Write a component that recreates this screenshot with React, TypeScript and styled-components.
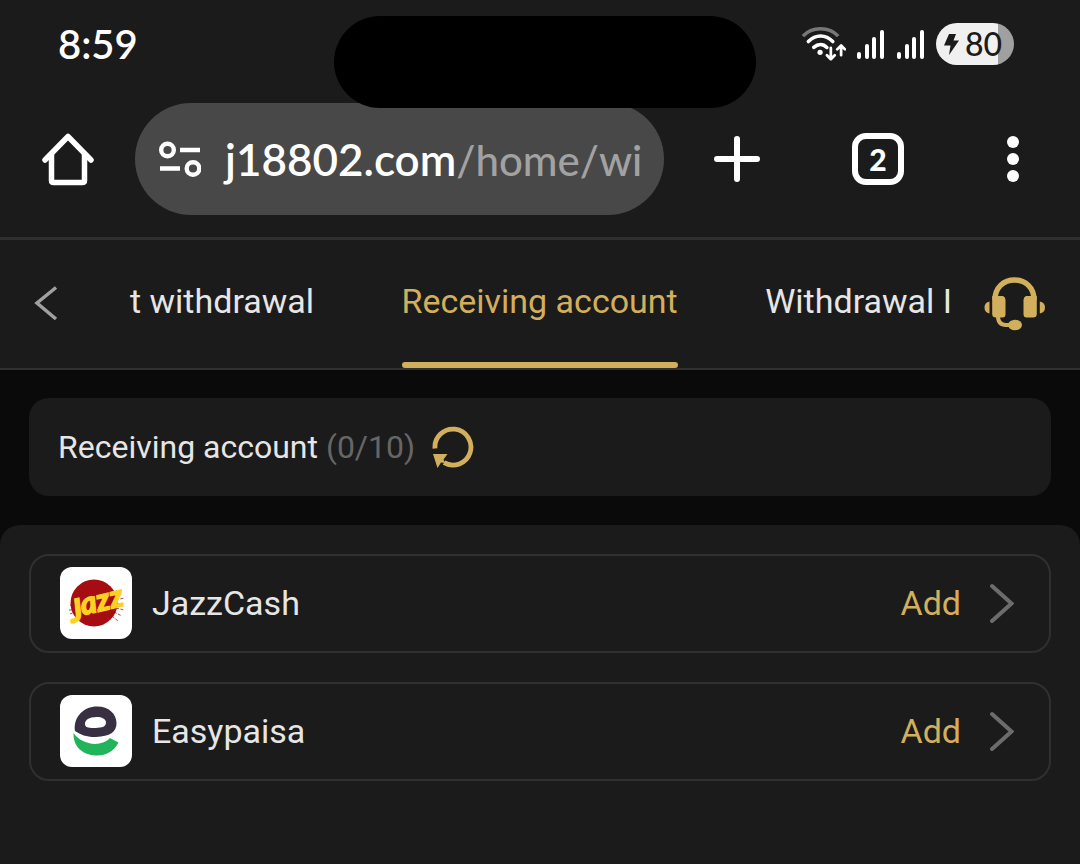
import React from "react";
import styled, { createGlobalStyle } from "styled-components";

const gold = "#d2af5c";
const surface = "#1b1b1b";
const line = "#303030";

const GlobalStyle = createGlobalStyle`
  * { box-sizing: border-box; }
  body {
    margin: 0;
    background: #0a0a0a;
    color: #e6e6e6;
    font-family: Roboto, "Liberation Sans", sans-serif;
  }
  button {
    border: 0;
    padding: 0;
    background: none;
    color: inherit;
    font: inherit;
    cursor: pointer;
  }
  svg { display: block; flex: none; }
`;

const Page = styled.div`
  display: flex;
  flex-direction: column;
  min-height: 100vh;
`;

const BrowserChrome = styled.header`
  position: relative;
  background: ${surface};
  border-bottom: 3px solid #2f2f2f;
  color: #fff;
`;

const StatusBar = styled.div`
  display: flex;
  align-items: center;
  justify-content: space-between;
  height: 80px;
  padding: 8px 66px 0 58px;
`;

const Clock = styled.time`
  font: 600 40px/48px Lato, sans-serif;
`;

const StatusIcons = styled.div`
  display: flex;
  align-items: center;
  gap: 10px;
`;

const Battery = styled.div`
  display: flex;
  align-items: center;
  justify-content: center;
  gap: 6px;
  width: 78px;
  height: 42px;
  padding-right: 4px;
  border-radius: 21px;
  background: linear-gradient(to right, #f0f0f0 80%, #a0a0a0 80%);
  color: #1b1b1b;
  font: 500 32px/42px Lato, sans-serif;
`;

const CameraCutout = styled.div`
  position: absolute;
  z-index: 1;
  top: 16px;
  left: 334px;
  width: 422px;
  height: 92px;
  border-radius: 46px;
  background: #000;
`;

const Toolbar = styled.div`
  display: flex;
  align-items: center;
  padding: 23px 0 22px;
`;

const ToolButton = styled.button<{ $width: number }>`
  display: flex;
  align-items: center;
  justify-content: center;
  flex: none;
  width: ${(p) => p.$width}px;
  height: 64px;
`;

const AddressBar = styled.button`
  display: flex;
  align-items: center;
  flex: 1;
  min-width: 0;
  height: 112px;
  padding: 0 20px 0 22px;
  gap: 24px;
  border-radius: 56px;
  background: #484848;
`;

const Address = styled.span`
  white-space: nowrap;
  color: #fff;
  font: 600 44px/60px Lato, sans-serif;
`;

const AddressPath = styled.span`
  color: #a2a2a2;
  font-size: 42px;
  font-weight: 500;
`;

const TabCount = styled.span`
  display: flex;
  align-items: center;
  justify-content: center;
  width: 52px;
  height: 52px;
  border: 6px solid #fff;
  border-radius: 14px;
  font: 900 30px/40px Lato, sans-serif;
`;

const PageNav = styled.nav`
  display: flex;
  align-items: center;
  height: 130px;
  padding-right: 34px;
  background: ${surface};
  border-bottom: 2px solid ${line};
`;

const NavButton = styled.button`
  display: flex;
  justify-content: center;
  flex: none;
  width: 92px;
`;

const TabList = styled.div`
  display: flex;
  flex: 1;
  align-self: stretch;
  justify-content: space-between;
  min-width: 0;
  padding: 0 32px 0 38px;
`;

const Tab = styled.button<{ $active?: boolean }>`
  display: flex;
  flex-direction: column;
  white-space: nowrap;
  font-size: 34px;
  line-height: 122px;
  color: ${(p) => (p.$active ? gold : "#e6e6e6")};

  &::after {
    content: "";
    align-self: stretch;
    height: 6px;
    border-radius: 3px;
    background: ${(p) => (p.$active ? gold : "transparent")};
  }
`;

const SummaryCard = styled.section`
  display: flex;
  align-items: center;
  gap: 16px;
  height: 98px;
  margin: 28px 29px 29px;
  padding: 0 29px;
  border-radius: 20px;
  background: ${surface};
`;

const SummaryTitle = styled.h1`
  margin: 0;
  font-size: 32px;
  font-weight: 400;
  line-height: 40px;
`;

const Count = styled.span`
  color: #666;
`;

const AccountPanel = styled.main`
  flex: 1;
  padding: 29px;
  border-radius: 20px 20px 0 0;
  background: ${surface};
`;

const AccountList = styled.ul`
  display: flex;
  flex-direction: column;
  gap: 29px;
  margin: 0;
  padding: 0;
  list-style: none;
`;

const AccountRow = styled.button`
  display: flex;
  align-items: center;
  width: 100%;
  height: 99px;
  padding: 0 35px 2px 29px;
  border: 2px solid ${line};
  border-radius: 20px;
  font-size: 34px;
  line-height: 44px;
  text-align: left;
`;

const Logo = styled.span`
  width: 72px;
  height: 72px;
  margin-right: 20px;
  border-radius: 12px;
  background: #fff;
  overflow: hidden;
`;

const AccountName = styled.span`
  flex: 1;
`;

const AddLabel = styled.span`
  margin-right: 28px;
  color: ${gold};
`;

const WifiIcon = () => (
  <svg width="45" height="36" viewBox="0 0 46 36" fill="none" stroke="#fff" strokeLinecap="round" strokeLinejoin="round">
    <path d="M2 10C11 0 29 0 38 10" stroke="#777" strokeWidth="3.600" strokeLinecap="butt" />
    <path d="M7.500 15.500C15 8 25 8 32.500 15.500" strokeWidth="3.600" />
    <path d="M13 21.500C17.500 17.500 22.500 17.500 26.500 21.500" strokeWidth="3.600" />
    <circle cx="19.500" cy="26.500" r="2.700" fill="#fff" stroke="none" />
    <path d="M30.500 22V33M26.500 29.500L30.500 33.500L34.500 29.500" strokeWidth="2.800" />
    <path d="M41 29.500V20M37 23.500L41 19.500L45 23.500" strokeWidth="2.800" />
  </svg>
);

const SignalIcon = () => (
  <svg width="30" height="30" viewBox="0 0 30 30" fill="#fff">
    <rect x="1" y="23" width="4" height="7" rx="2" />
    <rect x="9" y="15" width="4" height="15" rx="2" />
    <rect x="16" y="8" width="4" height="22" rx="2" />
    <rect x="24" y="1" width="4" height="29" rx="2" />
  </svg>
);

const BoltIcon = () => (
  <svg width="15" height="22" viewBox="0 0 15 22" fill="#1b1b1b">
    <path d="M5 1H12L9.500 7.500H15L5 22L6.500 12.500H0Z" />
  </svg>
);

const HomeIcon = () => (
  <svg width="52" height="54" viewBox="0 0 52 54" fill="none" stroke="#fff" strokeWidth="5.500" strokeLinecap="round" strokeLinejoin="round">
    <path d="M3 28L26 4.500L49 28" />
    <path d="M9.500 23V48.500Q9.500 50.500 11.500 50.500H40.500Q42.500 50.500 42.500 48.500V23" />
  </svg>
);

const SiteSettingsIcon = () => (
  <svg width="44" height="38" viewBox="0 0 44 38" fill="none" stroke="#fff" strokeWidth="4.400">
    <circle cx="10.500" cy="10" r="6.300" />
    <path d="M23 10H43M3 28.500H23" />
    <circle cx="36" cy="28.500" r="6.300" />
  </svg>
);

const PlusIcon = () => (
  <svg width="46" height="46" viewBox="0 0 46 46" stroke="#fff" strokeWidth="6" strokeLinecap="round">
    <path d="M3 23H43M23 3V43" />
  </svg>
);

const DotsIcon = () => (
  <svg width="12" height="46" viewBox="0 0 12 46" fill="#fff">
    <circle cx="6" cy="6" r="6" />
    <circle cx="6" cy="23" r="6" />
    <circle cx="6" cy="40" r="6" />
  </svg>
);

const BackIcon = () => (
  <svg width="24" height="36" viewBox="0 0 24 36" fill="none" stroke="#a0a0a0" strokeWidth="3.500">
    <path d="M22 1.500L3 17L22 33" />
  </svg>
);

const HeadsetIcon = () => (
  <svg width="62" height="56" viewBox="0 0 62 56" fill={gold}>
    <path d="M11 24C11 11 20 4 30.500 4S50 11 50 24" fill="none" stroke={gold} strokeWidth="5.500" />
    <path d="M8.200 20H19Q21.500 21 21.500 24V38Q21.500 41.500 18.500 41.500H12Q8.200 41.500 8.200 38Z" />
    <path d="M52.800 20H42Q39.500 21 39.500 24V38Q39.500 41.500 42.500 41.500H49Q52.800 41.500 52.800 38Z" />
    <path d="M5.500 25.500V37.500Q.500 36.500 .500 31.500T5.500 25.500Z" />
    <path d="M55.800 25.500V37.500Q61 36.500 61 31.500T55.800 25.500Z" />
    <path d="M14 40Q14 49 22 49H27" fill="none" stroke={gold} strokeWidth="4" />
    <ellipse cx="31" cy="49" rx="7" ry="5.300" />
  </svg>
);

const RefreshIcon = () => (
  <svg width="44" height="44" viewBox="0 0 44 44">
    <path d="M4 23.500A18 18 0 1 1 13 37.700" fill="none" stroke={gold} strokeWidth="4.800" />
    <path d="M2 29H16.500L12.500 34.500L14 38L10 37.500L6.500 43Z" fill={gold} />
  </svg>
);

const ChevronIcon = () => (
  <svg width="25" height="40" viewBox="0 0 25 40" fill="none" stroke="#6c6c6c" strokeWidth="4" strokeLinecap="round">
    <path d="M3 3L22.500 20.500L3 38" />
  </svg>
);

const JazzLogo = () => (
  <svg width="72" height="72" viewBox="0 0 72 72" role="img" aria-label="Jazz">
    <g stroke="#9a4a42" strokeWidth="1" strokeDasharray="3 1.500">
      <path d="M54 29L62 25M56 33L64 31M56 37L65 37M56 41L64 43M54 45L62 49M52 49L58 54M10 38L15 40M9 43L15 43M10 47L15 45" />
    </g>
    <circle cx="34" cy="36" r="23.500" fill="#a50d12" />
    <g transform="translate(11 51) rotate(-13)" fontFamily="Lato, sans-serif" fontStyle="italic" fontWeight="700">
      <text fontSize="31" fill="#ffd024" stroke="#ffd024" strokeWidth="1.500">
        <tspan dy="5">J</tspan>
        <tspan dy="-5">azz</tspan>
      </text>
    </g>
  </svg>
);

const EasypaisaLogo = () => (
  <svg width="72" height="72" viewBox="0 0 72 72">
    <path
      fillRule="evenodd"
      fill="#382f43"
      d="M15 36C13 22 24 11.500 37 11.500C49 11.500 56.500 19 56.500 28C56.500 37 50 41.500 36 42C27 42.300 21 40 15 36ZM25 29C25 32.500 29 33.300 35.500 33C42.500 32.700 46 31.500 46 27.500C46 24 42 22 36.500 22C29 22 25 25 25 29Z"
    />
    <path fill="#22b45b" d="M13.500 38C20 48 39 54 50 43L58.500 47.500C54 56.500 45 61 36 60.500C22 60 13 51 13.500 38Z" />
  </svg>
);

const accounts = [
  { name: "JazzCash", Icon: JazzLogo },
  { name: "Easypaisa", Icon: EasypaisaLogo },
];

export default function App() {
  return (
    <Page>
      <GlobalStyle />
      <BrowserChrome>
        <StatusBar>
          <Clock>8:59</Clock>
          <StatusIcons>
            <WifiIcon />
            <SignalIcon />
            <SignalIcon />
            <Battery>
              <BoltIcon />
              80
            </Battery>
          </StatusIcons>
        </StatusBar>
        <CameraCutout />
        <Toolbar>
          <ToolButton $width={135} aria-label="Home">
            <HomeIcon />
          </ToolButton>
          <AddressBar>
            <SiteSettingsIcon />
            <Address>
              j18802.com<AddressPath>/home/wi</AddressPath>
            </Address>
          </AddressBar>
          <ToolButton $width={146} aria-label="New tab">
            <PlusIcon />
          </ToolButton>
          <ToolButton $width={136} aria-label="Open tabs">
            <TabCount>2</TabCount>
          </ToolButton>
          <ToolButton $width={134} aria-label="Menu">
            <DotsIcon />
          </ToolButton>
        </Toolbar>
      </BrowserChrome>

      <PageNav>
        <NavButton aria-label="Back">
          <BackIcon />
        </NavButton>
        <TabList role="tablist">
          <Tab role="tab">t withdrawal</Tab>
          <Tab role="tab" aria-selected $active>
            Receiving account
          </Tab>
          <Tab role="tab">Withdrawal I</Tab>
        </TabList>
        <button aria-label="Customer support">
          <HeadsetIcon />
        </button>
      </PageNav>

      <SummaryCard>
        <SummaryTitle>
          Receiving account <Count>(0/10)</Count>
        </SummaryTitle>
        <button aria-label="Refresh">
          <RefreshIcon />
        </button>
      </SummaryCard>

      <AccountPanel>
        <AccountList>
          {accounts.map(({ name, Icon }) => (
            <li key={name}>
              <AccountRow>
                <Logo>
                  <Icon />
                </Logo>
                <AccountName>{name}</AccountName>
                <AddLabel>Add</AddLabel>
                <ChevronIcon />
              </AccountRow>
            </li>
          ))}
        </AccountList>
      </AccountPanel>
    </Page>
  );
}
